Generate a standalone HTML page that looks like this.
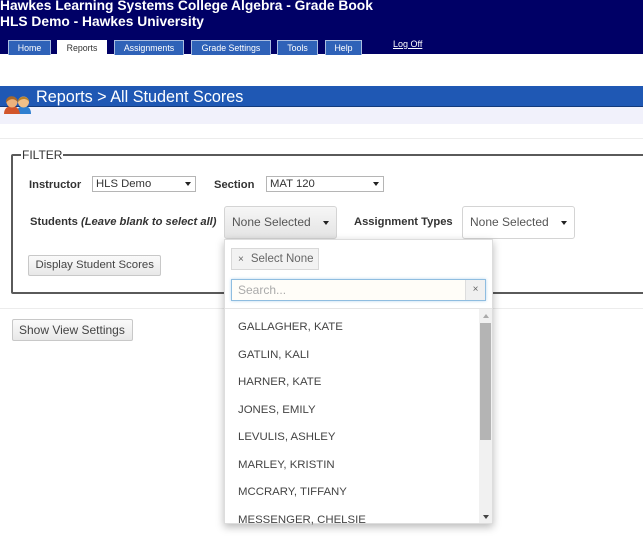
<!DOCTYPE html>
<html><head><meta charset="utf-8"><style>
html,body{margin:0;padding:0;background:#fff;width:643px;height:540px;overflow:hidden}
body{position:relative;font-family:"Liberation Sans",sans-serif;color:#333}
.a{position:absolute;white-space:nowrap}
.tab{position:absolute;top:40px;height:14px;background:#2f62b8;border:1px solid #a9bde0;border-bottom:0;color:#fff;font-size:8.8px;line-height:15px;text-align:center;box-sizing:content-box;white-space:nowrap}
.btn{position:absolute;box-sizing:border-box;border:1px solid #c8c8c8;border-radius:2px;font-size:12px;color:#444;background:linear-gradient(#fafafa,#e8e8e8);white-space:nowrap}
.lab{font-weight:bold;font-size:11.2px;color:#333}
.sel{position:absolute;box-sizing:border-box;height:16px;border:1px solid #b5b5b5;background:#fff;font-size:11.3px;line-height:14px;padding-left:3px;color:#333;white-space:nowrap}
.arr{position:absolute;width:0;height:0;border-left:3px solid transparent;border-right:3px solid transparent;border-top:4px solid #222}
.it{position:absolute;left:238px;font-size:11.4px;color:#444;white-space:nowrap;line-height:14px}
</style></head><body>
<div class="a" style="left:0;top:0;width:643px;height:54px;background:#000066"></div>
<div class="a" style="left:0;top:-2px;font-size:13.8px;font-weight:bold;color:#fff;line-height:16px">Hawkes Learning Systems College Algebra - Grade Book</div>
<div class="a" style="left:0;top:14px;font-size:13.8px;font-weight:bold;color:#fff;line-height:16px">HLS Demo - Hawkes University</div>
<div class="tab" style="left:8px;width:41px">Home</div>
<div class="tab" style="left:57px;top:40px;width:50px;height:15px;background:#fff;border:0;color:#333;line-height:16px">Reports</div>
<div class="tab" style="left:114px;width:68px">Assignments</div>
<div class="tab" style="left:191px;width:78px">Grade Settings</div>
<div class="tab" style="left:277px;width:39px">Tools</div>
<div class="tab" style="left:325px;width:35px">Help</div>
<div class="a" style="left:393px;top:39px;font-size:9px;color:#fff;text-decoration:underline;line-height:11px">Log Off</div>

<div class="a" style="left:0;top:86px;width:643px;height:21px;background:#1f58b4;border-bottom:1px solid #123a7c;box-sizing:border-box"></div>
<div class="a" style="left:0;top:107px;width:643px;height:17px;background:#f1f1fb"></div>
<div class="a" style="left:36px;top:88px;font-size:16.2px;color:#fff;line-height:19px">Reports &gt; All Student Scores</div>
<svg class="a" style="left:3px;top:92px" width="29" height="23" viewBox="0 0 29 23">
<path d="M13 22 C14 15 18 14 21 14 C25 14 28 16 28 22Z" fill="#2f7fd0"/>
<circle cx="20.500" cy="10" r="5.500" fill="#f0c088"/>
<path d="M15 10 C15 3 26 3 26 10 C24 6 18 6 15 10Z" fill="#b9822a"/>
<path d="M1 22 C1 16 5 14 9 14 C13 14 16 16 17 22Z" fill="#d2552a"/>
<circle cx="9" cy="10" r="5.500" fill="#eeb27c"/>
<path d="M3 11 C2 2 15 2 15 11 C13 6 6 6 3 11Z" fill="#a8682a"/>
</svg>

<div class="a" style="left:0;top:138px;width:643px;height:171px;box-sizing:border-box;border-top:1px solid #ececec;border-bottom:1px solid #ececec"></div>
<div class="a" style="left:11px;top:154px;width:650px;height:140px;box-sizing:border-box;border:2px solid #5a5a5a;border-radius:2px 0 0 2px"></div>
<div class="a" style="left:21px;top:148px;background:#fff;font-size:12px;color:#333;line-height:14px;padding:0 1px">FILTER</div>

<div class="a lab" style="left:29px;top:178px;line-height:14px">Instructor</div>
<div class="sel" style="left:92px;top:176px;width:104px">HLS Demo</div><div class="arr" style="left:185px;top:182px"></div>
<div class="a lab" style="left:214px;top:178px;line-height:14px">Section</div>
<div class="sel" style="left:266px;top:176px;width:118px">MAT 120</div><div class="arr" style="left:373px;top:182px"></div>

<div class="a lab" style="left:30px;top:215px;line-height:14px">Students <i>(Leave blank to select all)</i></div>
<div class="btn" style="left:224px;top:206px;width:113px;height:33px;line-height:31px;padding-left:7px;border-radius:3px;background:linear-gradient(#f6f6f6,#e4e4e4);color:#555;border-color:#d4d4d4">None Selected</div><div class="arr" style="left:323px;top:221px"></div>
<div class="a lab" style="left:354px;top:215px;line-height:14px">Assignment Types</div>
<div class="btn" style="left:462px;top:206px;width:113px;height:33px;line-height:31px;padding-left:7px;border-radius:3px;background:#fff;color:#555;border-color:#d4d4d4">None Selected</div><div class="arr" style="left:561px;top:221px"></div>
<div class="btn" style="left:28px;top:255px;width:133px;height:21px;line-height:19px;padding-left:6.500px;font-size:11.4px">Display Student Scores</div>
<div class="btn" style="left:12px;top:319px;width:121px;height:22px;line-height:20px;padding-left:6px">Show View Settings</div>

<div class="a" style="left:224px;top:239px;width:269px;height:285px;background:#fff;border:1px solid #ddd;box-sizing:border-box;box-shadow:0 3px 8px rgba(0,0,0,.28)"></div>
<div class="a" style="left:231px;top:248px;width:88px;height:22px;box-sizing:border-box;background:#f2f2f2;border:1px solid #d8d8d8;font-size:11.5px;line-height:20px;color:#666;padding-left:6px"><span style="font-size:10px;margin-right:7px">×</span>Select None</div>
<div class="a" style="left:231px;top:279px;width:255px;height:22px;box-sizing:border-box;background:#fffdf8;border:1px solid #8fbde0;box-shadow:0 0 3px #b8d8f0;font-size:12px;line-height:20px;color:#aaa;padding-left:6px">Search...</div>
<div class="a" style="left:465px;top:280px;width:20px;height:20px;box-sizing:border-box;background:#f0f0f0;border-left:1px solid #ddd;font-size:10px;line-height:19px;text-align:center;color:#666">×</div>
<div class="a" style="left:225px;top:308px;width:267px;height:1px;background:#e5e5e5"></div>

<div class="it" style="top:320px">GALLAGHER, KATE</div>
<div class="it" style="top:348px">GATLIN, KALI</div>
<div class="it" style="top:375px">HARNER, KATE</div>
<div class="it" style="top:403px">JONES, EMILY</div>
<div class="it" style="top:430px">LEVULIS, ASHLEY</div>
<div class="it" style="top:458px">MARLEY, KRISTIN</div>
<div class="it" style="top:485px">MCCRARY, TIFFANY</div>
<div class="it" style="top:513px">MESSENGER, CHELSIE</div>

<div class="a" style="left:479px;top:309px;width:13px;height:214px;background:#f1f1f1"></div>
<div class="a" style="left:480px;top:323px;width:11px;height:117px;background:#b4b4b4"></div>
<div class="a" style="left:483px;top:314px;width:0;height:0;border-left:3px solid transparent;border-right:3px solid transparent;border-bottom:4px solid #aaa"></div>
<div class="a" style="left:483px;top:515px;width:0;height:0;border-left:3px solid transparent;border-right:3px solid transparent;border-top:4px solid #444"></div>
</body></html>
